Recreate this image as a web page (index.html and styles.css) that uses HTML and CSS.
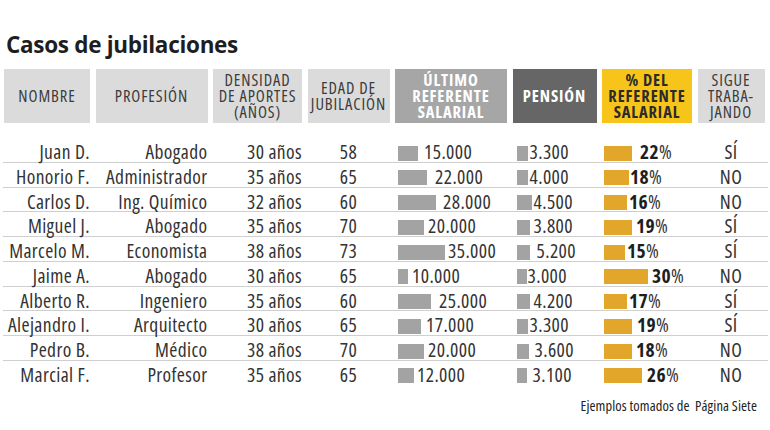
FILE: index.html
```html
<!DOCTYPE html>
<html lang="es">
<head>
<meta charset="utf-8">
<title>Casos de jubilaciones</title>
<link rel="stylesheet" href="styles.css">
</head>
<body>
<div class="page">
  <h1 class="title">Casos de jubilaciones</h1>
  <div class="table">
    <div class="head">
      <div class="hc h-light">NOMBRE</div>
      <div class="hc h-light">PROFESIÓN</div>
      <div class="hc h-light">DENSIDAD<br>DE APORTES<br>(AÑOS)</div>
      <div class="hc h-light">EDAD DE<br>JUBILACIÓN</div>
      <div class="hc h-mid">ÚLTIMO<br>REFERENTE<br>SALARIAL</div>
      <div class="hc h-dark">PENSIÓN</div>
      <div class="hc h-yellow">% DEL<br>REFERENTE<br>SALARIAL</div>
      <div class="hc h-light">SIGUE<br>TRABA-<br>JANDO</div>
    </div>
    <div class="rows">
      <div class="row"><div class="c r">Juan D.</div><div class="c r">Abogado</div><div class="c r">30 años</div><div class="c m">58</div>
        <div class="c bar-cell s1"><span class="bar gray" style="width:20px"></span><span class="num" style="margin-left:6px">15.000</span></div>
        <div class="c bar-cell s2"><span class="bar gray" style="width:11px"></span><span class="num" style="margin-left:2px">3.300</span></div>
        <div class="c bar-cell s3"><span class="bar gold" style="width:28px"></span><span class="num" style="margin-left:8px"><b>22</b>%</span></div>
        <div class="c m">SÍ</div></div>
      <div class="row"><div class="c r">Honorio F.</div><div class="c r">Administrador</div><div class="c r">35 años</div><div class="c m">65</div>
        <div class="c bar-cell s1"><span class="bar gray" style="width:29px"></span><span class="num" style="margin-left:8px">22.000</span></div>
        <div class="c bar-cell s2"><span class="bar gray" style="width:11px"></span><span class="num" style="margin-left:2px">4.000</span></div>
        <div class="c bar-cell s3"><span class="bar gold" style="width:25px"></span><span class="num" style="margin-left:1px"><b>18</b>%</span></div>
        <div class="c m">NO</div></div>
      <div class="row"><div class="c r">Carlos D.</div><div class="c r">Ing. Químico</div><div class="c r">32 años</div><div class="c m">60</div>
        <div class="c bar-cell s1"><span class="bar gray" style="width:38px"></span><span class="num" style="margin-left:7px">28.000</span></div>
        <div class="c bar-cell s2"><span class="bar gray" style="width:15px"></span><span class="num" style="margin-left:2px">4.500</span></div>
        <div class="c bar-cell s3"><span class="bar gold" style="width:23px"></span><span class="num" style="margin-left:2px"><b>16</b>%</span></div>
        <div class="c m">NO</div></div>
      <div class="row"><div class="c r">Miguel J.</div><div class="c r">Abogado</div><div class="c r">35 años</div><div class="c m">70</div>
        <div class="c bar-cell s1"><span class="bar gray" style="width:26px"></span><span class="num" style="margin-left:4px">20.000</span></div>
        <div class="c bar-cell s2"><span class="bar gray" style="width:13px"></span><span class="num" style="margin-left:4px">3.800</span></div>
        <div class="c bar-cell s3"><span class="bar gold" style="width:28px"></span><span class="num" style="margin-left:4px"><b>19</b>%</span></div>
        <div class="c m">SÍ</div></div>
      <div class="row"><div class="c r">Marcelo M.</div><div class="c r">Economista</div><div class="c r">38 años</div><div class="c m">73</div>
        <div class="c bar-cell s1"><span class="bar gray" style="width:47px"></span><span class="num" style="margin-left:3px">35.000</span></div>
        <div class="c bar-cell s2"><span class="bar gray" style="width:13px"></span><span class="num" style="margin-left:7px">5.200</span></div>
        <div class="c bar-cell s3"><span class="bar gold" style="width:21px"></span><span class="num" style="margin-left:2px"><b>15</b>%</span></div>
        <div class="c m">SÍ</div></div>
      <div class="row"><div class="c r">Jaime A.</div><div class="c r">Abogado</div><div class="c r">30 años</div><div class="c m">65</div>
        <div class="c bar-cell s1"><span class="bar gray" style="width:10px"></span><span class="num" style="margin-left:4px">10.000</span></div>
        <div class="c bar-cell s2"><span class="bar gray" style="width:10px"></span><span class="num" style="margin-left:1px">3.000</span></div>
        <div class="c bar-cell s3"><span class="bar gold" style="width:44px"></span><span class="num" style="margin-left:4px"><b>30</b>%</span></div>
        <div class="c m">NO</div></div>
      <div class="row"><div class="c r">Alberto R.</div><div class="c r">Ingeniero</div><div class="c r">35 años</div><div class="c m">60</div>
        <div class="c bar-cell s1"><span class="bar gray" style="width:33px"></span><span class="num" style="margin-left:8px">25.000</span></div>
        <div class="c bar-cell s2"><span class="bar gray" style="width:13px"></span><span class="num" style="margin-left:4px">4.200</span></div>
        <div class="c bar-cell s3"><span class="bar gold" style="width:23px"></span><span class="num" style="margin-left:2px"><b>17</b>%</span></div>
        <div class="c m">SÍ</div></div>
      <div class="row"><div class="c r">Alejandro I.</div><div class="c r">Arquitecto</div><div class="c r">30 años</div><div class="c m">65</div>
        <div class="c bar-cell s1"><span class="bar gray" style="width:23px"></span><span class="num" style="margin-left:5px">17.000</span></div>
        <div class="c bar-cell s2"><span class="bar gray" style="width:11px"></span><span class="num" style="margin-left:2px">3.300</span></div>
        <div class="c bar-cell s3"><span class="bar gold" style="width:28px"></span><span class="num" style="margin-left:5px"><b>19</b>%</span></div>
        <div class="c m">SÍ</div></div>
      <div class="row"><div class="c r">Pedro B.</div><div class="c r">Médico</div><div class="c r">38 años</div><div class="c m">70</div>
        <div class="c bar-cell s1"><span class="bar gray" style="width:26px"></span><span class="num" style="margin-left:4px">20.000</span></div>
        <div class="c bar-cell s2"><span class="bar gray" style="width:12px"></span><span class="num" style="margin-left:6px">3.600</span></div>
        <div class="c bar-cell s3"><span class="bar gold" style="width:28px"></span><span class="num" style="margin-left:4px"><b>18</b>%</span></div>
        <div class="c m">NO</div></div>
      <div class="row"><div class="c r">Marcial F.</div><div class="c r">Profesor</div><div class="c r">35 años</div><div class="c m">65</div>
        <div class="c bar-cell s1"><span class="bar gray" style="width:16px"></span><span class="num" style="margin-left:3px">12.000</span></div>
        <div class="c bar-cell s2"><span class="bar gray" style="width:10px"></span><span class="num" style="margin-left:6px">3.100</span></div>
        <div class="c bar-cell s3"><span class="bar gold" style="width:38px"></span><span class="num" style="margin-left:5px"><b>26</b>%</span></div>
        <div class="c m">NO</div></div>
    </div>
  </div>
  <div class="footer">Ejemplos tomados de&nbsp; Página Siete</div>
</div>
</body>
</html>
```
FILE: styles.css
```css
html, body {
  margin: 0;
  padding: 0;
  background: #ffffff;
}
body {
  font-family: "Open Sans", "DejaVu Sans", sans-serif;
  font-stretch: 75%;
  color: #333333;
  width: 770px;
  height: 430px;
  overflow: hidden;
}
.page {
  padding: 30px 0 0 0;
}
.title {
  margin: 0 0 0 6px;
  font-size: 22.5px;
  font-stretch: 100%;
  line-height: 30px;
  font-weight: 700;
  color: #1e1e1e;
  letter-spacing: -0.3px;
}
.table {
  margin-top: 9px;
}
.head,
.row {
  display: grid;
  grid-template-columns: 86px 112px 89px 82px 112px 84px 90px 67px;
  column-gap: 5.5px;
}
.head {
  margin-left: 4px;
  height: 54px;
}
.hc {
  display: flex;
  align-items: center;
  justify-content: center;
  text-align: center;
  font-size: 16.5px;
  line-height: 16px;
  letter-spacing: 0.9px;
}
.h-light {
  background: #dbdbdb;
  color: #3c3c3c;
}
.h-mid {
  background: #a6a6a6;
  color: #ffffff;
  font-weight: 700;
}
.h-dark {
  background: #666666;
  color: #ffffff;
  font-weight: 700;
}
.h-yellow {
  background: #f7c41a;
  color: #2b2b2b;
  font-weight: 700;
}
.rows {
  margin-top: 15px;
  margin-left: 3px;
  width: 765px;
}
.row {
  padding-left: 1px;
  height: 24.75px;
  box-sizing: border-box;
  border-bottom: 1px solid #cfcfcf;
  font-size: 19.5px;
  letter-spacing: 0.4px;
}
.row:last-child {
  border-bottom: none;
}
.c {
  display: flex;
  align-items: center;
  white-space: nowrap;
  color: #333333;
  padding-bottom: 3px;
}
.r {
  justify-content: flex-end;
}
.m {
  justify-content: center;
}
.bar-cell {
  justify-content: flex-start;
}
.s1 { padding-left: 3px; }
.s2 { padding-left: 4px; }
.s3 { padding-left: 2px; }
.bar {
  display: inline-block;
  height: 15px;
  margin-top: 3px;
  flex: none;
}
.gray {
  background: #a3a3a3;
}
.gold {
  background: #e1a62a;
}
.num b {
  font-weight: 700;
  color: #1e1e1e;
}
.footer {
  text-align: right;
  margin-top: 10px;
  margin-right: 13px;
  font-size: 14.5px;
  letter-spacing: 0.1px;
  color: #222222;
}
```
